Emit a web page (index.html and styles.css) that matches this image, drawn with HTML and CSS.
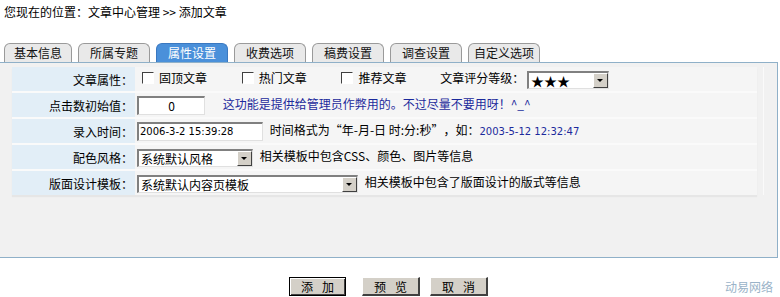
FILE: index.html
```html
<!DOCTYPE html>
<html lang="zh-CN">
	<head>
		<meta charset="UTF-8">
		<title>添加文章</title>
		<link rel="stylesheet" href="styles.css">
	</head>
	<body>
		<div class="location">您现在的位置：文章中心管理 &gt;&gt; 添加文章</div>
		<ul class="tabs">
			<li>基本信息</li>
			<li>所属专题</li>
			<li class="on">属性设置</li>
			<li>收费选项</li>
			<li>稿费设置</li>
			<li>调查设置</li>
			<li>自定义选项</li>
		</ul>
		<div class="panel">
			<div class="frame">
				<table class="form">
					<tr>
						<td class="label">文章属性：</td>
						<td class="value">
							<span class="chk"></span><span class="opt">固顶文章</span>
							<span class="chk"></span><span class="opt">热门文章</span>
							<span class="chk"></span><span class="opt">推荐文章</span>
							<span class="grade">文章评分等级：</span>
							<span class="select stars"><span class="txt">★★★</span><span class="arrow"></span></span>
						</td>
					</tr>
					<tr>
						<td class="label">点击数初始值：</td>
						<td class="value">
							<span class="input hits">0</span>
							<span class="tip">这功能是提供给管理员作弊用的。不过尽量不要用呀！^_^</span>
						</td>
					</tr>
					<tr>
						<td class="label">录入时间：</td>
						<td class="value">
							<span class="input time">2006-3-2 15:39:28</span>
							<span class="note">时间格式为<span class="q ql">“</span>年-月-日 时:分:秒<span class="q qr">”</span>，如：<span class="sample">2003-5-12 12:32:47</span></span>
						</td>
					</tr>
					<tr>
						<td class="label">配色风格：</td>
						<td class="value">
							<span class="select skin"><span class="txt">系统默认风格</span><span class="arrow"></span></span>
							<span class="note">相关模板中包含CSS、颜色、图片等信息</span>
						</td>
					</tr>
					<tr>
						<td class="label">版面设计模板：</td>
						<td class="value">
							<span class="select tpl"><span class="txt">系统默认内容页模板</span><span class="arrow"></span></span>
							<span class="note">相关模板中包含了版面设计的版式等信息</span>
						</td>
					</tr>
				</table>
			</div>
		</div>
		<div class="buttons">
			<span class="btn def">添加</span>
			<span class="btn">预览</span>
			<span class="btn">取消</span>
			<span class="brand">动易网络</span>
		</div>
	</body>
</html>
```

FILE: styles.css
```css
body{
	margin: 0;
	font-family: "Noto Sans CJK SC", "Liberation Sans", sans-serif;
	font-size: 12px;
	color: #000;
	background: #fff;
}
ul{
	margin: 0;
	padding: 0;
	list-style: none;
}
.location{
	height: 24px;
	line-height: 24px;
	padding-left: 4px;
}
.tabs{
	display: flex;
	gap: 6px;
	margin-top: 19px;
	padding-left: 4px;
	height: 19px;
}
.tabs li{
	box-sizing: border-box;
	width: 72px;
	height: 19px;
	line-height: 18px;
	text-align: center;
	background: #e9e9e9;
	border: 1px solid #9a9a9a;
	border-bottom: none;
	border-radius: 6px 6px 0 0;
	color: #111;
}
.tabs li:first-child{
	width: 68px;
}
.tabs li.on{
	background: #4a90da;
	border-color: #3a78c0;
	color: #fff;
}
.panel{
	box-sizing: border-box;
	height: 196px;
	background: #f1f1f1;
	border-top: 1px solid #8fb0c8;
	border-right: 1px solid #8fb0c8;
	border-bottom: 1px solid #8fb0c8;
	margin-right: 2px;
	padding: 4px 13px 0 12px;
}
.frame{
	border-right: 1px solid #fafafa;
	padding-right: 5px;
}
.form{
	width: 745px;
	border-collapse: collapse;
	box-shadow: 0 2px 1px #e6e6e6;
}
.form td{
	height: 24px;
	padding: 0;
	border-bottom: 2px solid #fafafa;
}
.form tr:last-child td{
	border-bottom: none;
}
.form .label{
	width: 121px;
	background: #e2eef7;
	text-align: right;
	padding-right: 2px;
}
.form .value{
	background: #f5f5f5;
	padding-left: 2px;
	white-space: nowrap;
}
.chk{
	display: inline-block;
	box-sizing: border-box;
	width: 12px;
	height: 12px;
	vertical-align: -1px;
	border-top: 1px solid #404040;
	border-left: 1px solid #404040;
	border-right: 1px solid #fff;
	border-bottom: 1px solid #fff;
	background: #fff;
	margin-left: 5px;
}
.opt{
	margin-left: 5px;
	margin-right: 27px;
}
.grade{
	margin-left: 4px;
}
.select{
	display: inline-flex;
	box-sizing: border-box;
	height: 18px;
	vertical-align: middle;
	background: #fff;
	border-top: 2px solid #808080;
	border-left: 2px solid #808080;
	border-right: 1px solid #e0e0e0;
	border-bottom: 1px solid #e0e0e0;
}
.select .txt{
	flex: 1;
	line-height: 15px;
	padding-left: 2px;
}
.select .arrow{
	position: relative;
	box-sizing: border-box;
	width: 15px;
	height: 15px;
	background: #d4d0c8;
	border-top: 1px solid #fff;
	border-left: 1px solid #fff;
	border-right: 1px solid #404040;
	border-bottom: 1px solid #404040;
}
.select .arrow::after{
	content: "";
	position: absolute;
	left: 3px;
	top: 5px;
	border-left: 3px solid transparent;
	border-right: 3px solid transparent;
	border-top: 3px solid #000;
}
.stars{
	width: 82px;
	margin-left: 0;
}
.stars .txt{
	font-size: 13px;
}
.skin{
	width: 116px;
}
.tpl{
	width: 221px;
}
.input{
	display: inline-block;
	box-sizing: border-box;
	height: 19px;
	line-height: 16px;
	vertical-align: middle;
	background: #fff;
	border-top: 2px solid #808080;
	border-left: 2px solid #808080;
	border-right: 1px solid #e0e0e0;
	border-bottom: 1px solid #e0e0e0;
}
.hits{
	width: 68px;
	text-align: center;
}
.time{
	width: 126px;
	padding-left: 1px;
	font-family: "DejaVu Sans", sans-serif;
	font-size: 10px;
}
.tip{
	color: #1c2a9c;
	margin-left: 15px;
}
.note{
	margin-left: 4px;
}
.q{
	display: inline-block;
	width: 12px;
}
.ql{
	text-align: right;
}
.qr{
	text-align: left;
}
.sample{
	color: #1c2a9c;
	font-family: "DejaVu Sans", sans-serif;
	font-size: 10px;
}
.buttons{
	display: flex;
	align-items: center;
	gap: 10px;
	margin-top: 18px;
	padding-left: 289px;
	padding-right: 7px;
	height: 20px;
}
.btn{
	box-sizing: border-box;
	width: 58px;
	height: 19px;
	line-height: 17px;
	text-align: center;
	letter-spacing: 9px;
	text-indent: 9px;
	background: #d4d0c8;
	border-top: 1px solid #fff;
	border-left: 1px solid #fff;
	border-right: 2px solid #404040;
	border-bottom: 2px solid #404040;
}
.btn.def{
	width: 57px;
	border: 1px solid #000;
	box-shadow: inset 1px 1px 0 #fff, inset -1px -1px 0 #404040;
	margin-right: 6px;
}
.brand{
	margin-left: auto;
	color: #9ab3c8;
	line-height: 18px;
	margin-top: 2px;
}
```
